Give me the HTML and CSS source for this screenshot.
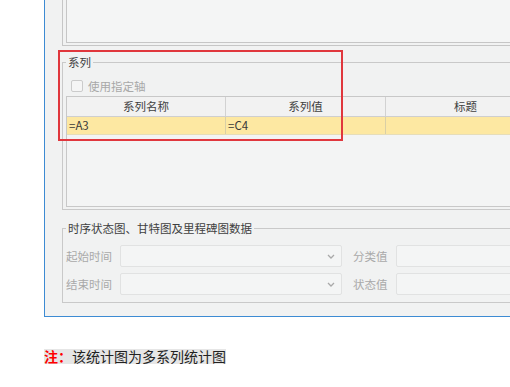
FILE: index.html
```html
<!DOCTYPE html>
<html lang="zh">
<head>
    <meta charset="UTF-8">
    <title>系列统计图设置</title>
    <link rel="stylesheet" href="styles.css">
</head>
<body>
    <div class="window">
        <div class="top-group"><div class="top-list"></div></div>

        <fieldset class="group series">
            <legend>系列</legend>
            <label class="check"><span class="box"></span>使用指定轴</label>
            <div class="grid">
                <div class="row head">
                    <div class="cell">系列名称</div>
                    <div class="cell">系列值</div>
                    <div class="cell">标题</div>
                </div>
                <div class="row data">
                    <div class="cell">=A3</div>
                    <div class="cell">=C4</div>
                    <div class="cell"></div>
                </div>
            </div>
        </fieldset>

        <fieldset class="group timing">
            <legend>时序状态图、甘特图及里程碑图数据</legend>
            <div class="field-row">
                <span class="lbl">起始时间</span>
                <div class="select">
                    <svg width="8" height="5" viewBox="0 0 8 5"><path d="M1 1l3 3 3-3" fill="none" stroke="#a9a9a9" stroke-width="1.3"/></svg>
                </div>
                <span class="lbl lbl-short">分类值</span>
                <div class="input"></div>
            </div>
            <div class="field-row">
                <span class="lbl">结束时间</span>
                <div class="select">
                    <svg width="8" height="5" viewBox="0 0 8 5"><path d="M1 1l3 3 3-3" fill="none" stroke="#a9a9a9" stroke-width="1.3"/></svg>
                </div>
                <span class="lbl lbl-short">状态值</span>
                <div class="input"></div>
            </div>
        </fieldset>

        <!-- 红框标注 -->
        <div class="callout"></div>
    </div>

    <p class="note"><span><b>注：</b>该统计图为多系列统计图</span></p>
</body>
</html>
```

FILE: styles.css
```css
body { margin: 0; background: #fff; font-family: "Noto Sans CJK SC", sans-serif; }

.window { position: relative; margin-left: 44px; width: 466px; height: 317px; box-sizing: border-box; padding-left: 17px; background: #f1f2f2; border-left: 1px solid #3d8bd3; border-bottom: 1px solid #3d8bd3; overflow: hidden; }

.top-group { width: 520px; height: 46px; box-sizing: border-box; padding: 0 2px 2px 3px; border: 1px solid #c6c6c6; border-top: none; }
.top-list { height: 100%; box-sizing: border-box; border: 1px solid #c6c6c6; border-top: none; background: #f4f5f5; }

.group { width: 560px; min-width: 0; box-sizing: border-box; margin: 0; border: 1px solid #c9c9c9; padding: 0 2px 2px 3px; }
.group legend { padding: 0 2px; font-size: 11.5px; line-height: 14px; color: #404040; }
.series { margin-top: 9px; }
.timing { margin-top: 11px; padding-bottom: 7px; }

.check { display: flex; align-items: center; height: 13px; margin: 10px 0 4px 5px; font-size: 11.5px; color: #a8a8a8; }
.check .box { width: 12px; height: 12px; box-sizing: border-box; border: 1px solid #cbcbcb; border-radius: 2px; background: #f5f5f5; margin-right: 5px; }

.grid { height: 111px; box-sizing: border-box; border: 1px solid #c8c8c8; background: #f3f4f4; }
.row { display: grid; grid-template-columns: 159px 160px 160px; font-size: 11.5px; }
.cell { border-right: 1px solid #d2d2d2; white-space: nowrap; overflow: hidden; }
.head { height: 19px; line-height: 19px; border-bottom: 1px solid #cfcfcf; background: #f2f2f2; color: #404040; }
.head .cell { text-align: center; }
.data { height: 17px; line-height: 17px; background: #fde8a2; border-bottom: 1px solid #e6ddb9; color: #3a3a3a; }
.data .cell { padding-left: 2px; border-right-color: #d9cfa6; }

.field-row { display: flex; align-items: center; height: 22px; margin-top: 6px; font-size: 11.5px; }
.field-row:first-of-type { margin-top: 10px; }
.field-row > * { flex-shrink: 0; }
.lbl { width: 54px; color: #a9a9a9; white-space: nowrap; }
.lbl-short { width: 43px; margin-left: 11px; }
.select, .input { height: 22px; box-sizing: border-box; border: 1px solid #e1e2e2; border-radius: 2px; background: #f4f5f5; }
.select { width: 222px; display: flex; align-items: center; justify-content: flex-end; padding-right: 6px; }
.input { width: 200px; }

.callout { position: absolute; left: 13px; top: 50px; width: 285px; height: 91px; box-sizing: border-box; border: 2px solid #e0373d; }

.note { margin: 32px 0 0 44px; font-size: 14px; line-height: 15px; }
.note span { display: inline-block; background: #e6e6e6; color: #222; }
.note b { color: #f00; }
```
